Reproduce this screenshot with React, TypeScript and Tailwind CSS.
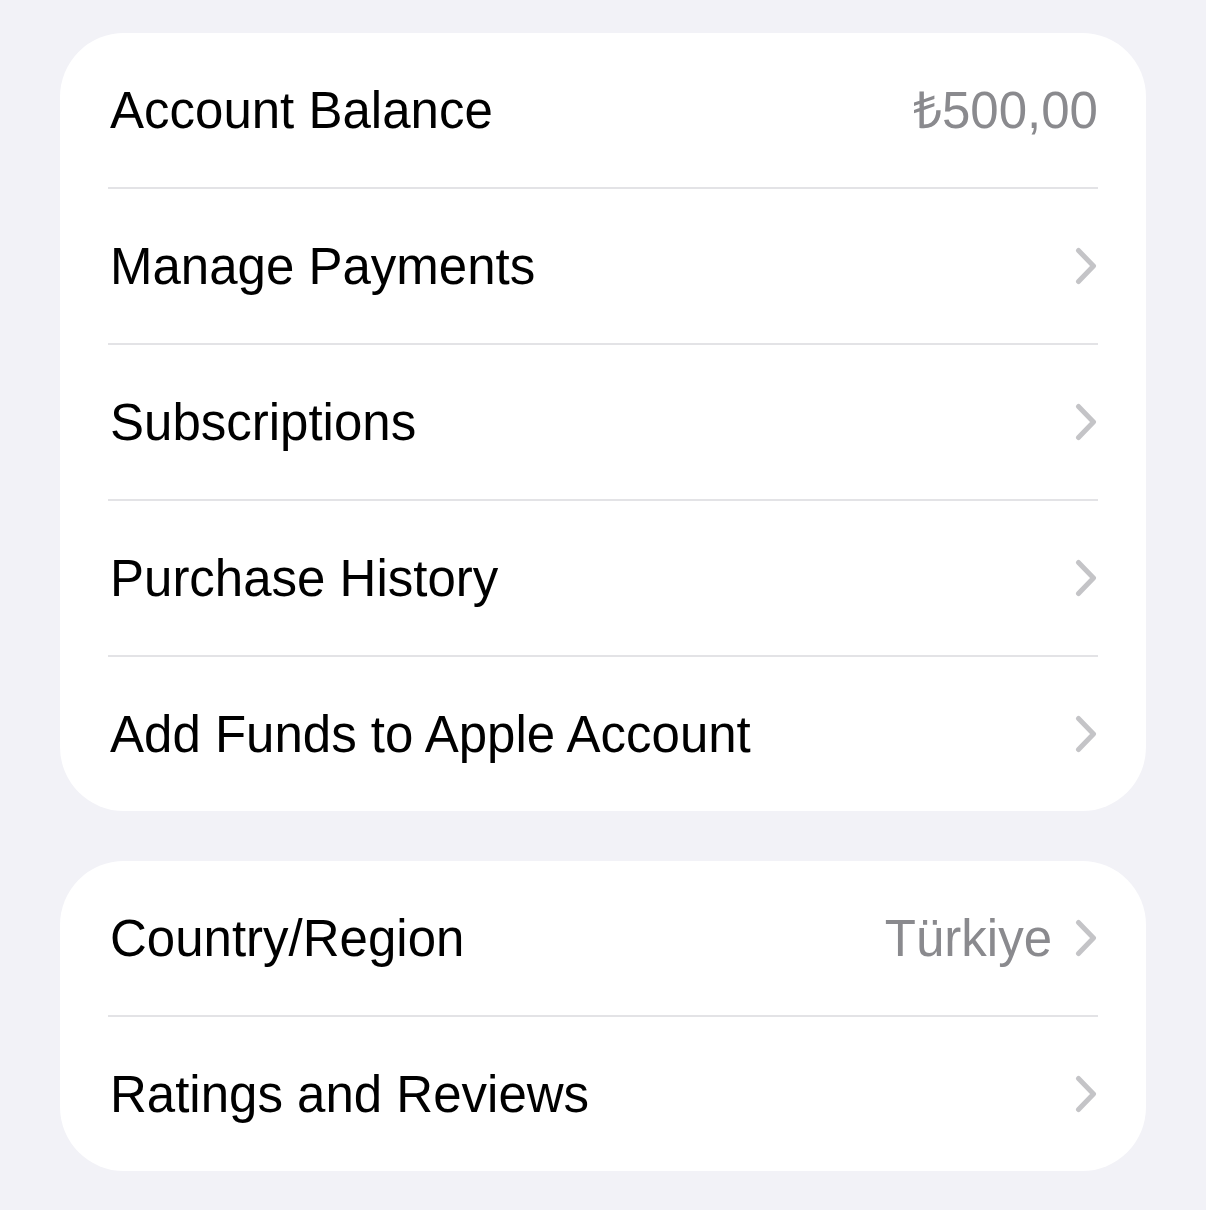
import { Fragment } from "react";

type Row = { label: string; value?: string; chevron?: boolean };

const groups: Row[][] = [
  [
    { label: "Account Balance", value: "₺500,00" },
    { label: "Manage Payments", chevron: true },
    { label: "Subscriptions", chevron: true },
    { label: "Purchase History", chevron: true },
    { label: "Add Funds to Apple Account", chevron: true },
  ],
  [
    { label: "Country/Region", value: "Türkiye", chevron: true },
    { label: "Ratings and Reviews", chevron: true },
  ],
];

function Chevron() {
  return (
    <svg width="24" height="38" viewBox="0 0 24 38" fill="none" stroke="#c4c4c7" strokeWidth="5" strokeLinecap="round" strokeLinejoin="round" className="ml-[22px]">
      <path d="M4.5 3.5L19.5 19L4.5 34.5" />
    </svg>
  );
}

export default function App() {
  return (
    <div className="min-h-[1210px] w-full bg-[#f2f2f7] pt-[33px] px-[60px] font-['Liberation_Sans',Arial,sans-serif]">
      <div className="flex flex-col gap-[50px]">
        {groups.map((rows, g) => (
          <div key={g} className="bg-white rounded-[64px] px-[48px]">
            {rows.map((r, i) => (
              <Fragment key={r.label}>
                {i > 0 && <div className="h-[2px] bg-[#e3e3e6]" />}
                <div className="h-[154px] flex items-center justify-between">
                  <span className="text-[51px] leading-none text-black pl-[2px]">{r.label}</span>
                  <div className="flex items-center">
                    {r.value && <span className="text-[51px] leading-none text-[#8a8a8e]">{r.value}</span>}
                    {r.chevron && <Chevron />}
                  </div>
                </div>
              </Fragment>
            ))}
          </div>
        ))}
      </div>
    </div>
  );
}
